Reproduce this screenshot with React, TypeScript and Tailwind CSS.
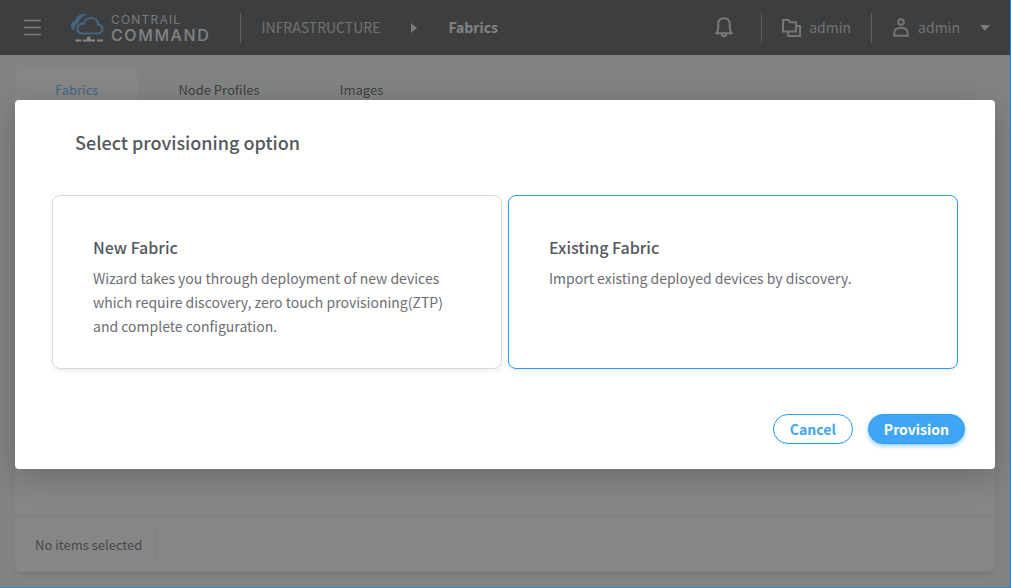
import React, { useState } from "react";

function Logo() {
  return (
    <a href="#home" className="flex items-center gap-[7px]" aria-label="Contrail Command">
      <svg className="h-[30px] w-[34px]" viewBox="0 0 34 30" fill="none" aria-hidden="true">
        <path d="M1 12.5C1.4 9.8 3 8.2 5.2 7.6C6.2 2.6 11.8-.4 17.6 1.2C12.6 3.2 9.4 5.6 8.8 9.3C5.8 10.7 3.9 13.6 4.5 17.6C2.2 16.6 .8 14.8 1 12.5Z" fill="#4ba6f2" />
        <path
          d="M12 20.5H27.5C30.4 20.5 32.4 18.6 32.4 16.2C32.4 13.7 30.6 12 28.2 11.8C28 7.8 25 5 21 5C17.4 5 14.7 7 13.7 10.6C9.8 10.2 7.4 12.5 7.4 15.6C7.4 18.5 9.4 20.5 12 20.5Z"
          stroke="#4ba6f2"
          strokeWidth="2.2"
        />
        <path d="M5.5 26.5h6v2h-6zM13 26.5h4v-2.8h3.5v2.8h4.5v2H13zM27 26.5h6v2h-6z" fill="#ffffff" />
      </svg>
      <span className="flex flex-col font-['Inter',sans-serif] text-[#f4f4f4]">
        <span className="text-[12px] leading-[14px] tracking-widest text-[#dcdcdc]">CONTRAIL</span>
        <span className="text-[16px] leading-[16px] font-medium tracking-widest">COMMAND</span>
      </span>
    </a>
  );
}

function Divider() {
  return <span className="h-[30px] w-px shrink-0 bg-[#97999b]" />;
}

function Header() {
  return (
    <header className="flex h-[55px] shrink-0 items-center bg-[#3a3c3f] text-[#c8c9ca]">
      <button type="button" aria-label="Toggle menu" className="mr-[29px] ml-[24px] flex h-[18px] w-[17px] items-center">
        <svg className="h-[18px] w-[17px]" viewBox="0 0 17 18" stroke="#e0e0e0" strokeWidth="1.6" aria-hidden="true">
          <path d="M0 1.5h17M0 8.5h17M0 15.5h17" />
        </svg>
      </button>
      <Logo />
      <nav aria-label="Breadcrumb" className="ml-[30px] flex flex-1 items-center text-[14px]">
        <Divider />
        <a href="#infrastructure" className="ml-[20px] text-[#c8c9ca]">INFRASTRUCTURE</a>
        <svg className="mx-[31px] h-[10px] w-[6px]" viewBox="0 0 6 10" fill="#e0e0e0" aria-hidden="true">
          <path d="M0 0L6 5L0 10Z" />
        </svg>
        <span className="font-bold text-[#f4f4f4]">Fabrics</span>
      </nav>
      <button type="button" aria-label="Notifications" className="mr-[28px]">
        <svg className="h-[22px] w-[18px]" viewBox="0 0 18 22" fill="none" stroke="#dadada" strokeWidth="2" aria-hidden="true">
          <path d="M1 16.2H17C15.4 14.8 14.8 13.6 14.8 11.8V7C14.8 3.2 12.4 1.2 9 1.2S3.2 3.2 3.2 7V11.8C3.2 13.6 2.6 14.8 1 16.2Z" strokeLinejoin="round" />
          <path d="M6.6 16.8C6.8 20 11.2 20 11.4 16.8" />
        </svg>
      </button>
      <Divider />
      <button type="button" className="mx-[20px] flex items-center gap-2 text-[14px]">
        <svg className="h-[18px] w-[19px]" viewBox="0 0 19 18" fill="none" stroke="#d2d2d2" strokeWidth="2" aria-hidden="true">
          <path d="M1 1H6.6L8 3.2H14V12.4H1V0" />
          <path d="M14 7H18V17H6.2V12.4" />
        </svg>
        admin
      </button>
      <Divider />
      <button type="button" className="mx-[21px] flex items-center text-[14px]">
        <svg className="mr-[9px] h-[19px] w-[16px]" viewBox="0 0 16 19" fill="none" stroke="#d2d2d2" strokeWidth="2" aria-hidden="true">
          <circle cx="8" cy="4" r="2.8" />
          <path d="M1.2 17.8V15.4C1.2 12 3.8 9.8 8 9.8S14.8 12 14.8 15.4V17.8Z" strokeLinejoin="round" />
        </svg>
        admin
        <svg className="ml-[20px] h-[6px] w-[10px]" viewBox="0 0 10 6" fill="#e0e0e0" aria-hidden="true">
          <path d="M0 0H10L5 6Z" />
        </svg>
      </button>
    </header>
  );
}

function FabricsPage() {
  return (
    <main className="flex flex-1 flex-col pt-[15px] pr-4 pb-4 pl-[15px]">
      <nav className="flex text-[13px] text-[#3c3e42]">
        <a href="#fabrics" className="rounded-t-md bg-white px-[40px] py-[10px] leading-[20px] text-[#45a8ff]">Fabrics</a>
        <a href="#node-profiles" className="px-[40px] py-[10px] leading-[20px]">Node Profiles</a>
        <a href="#images" className="px-[40px] py-[10px] leading-[20px]">Images</a>
      </nav>
      <section className="flex flex-1 flex-col rounded-b-md bg-white shadow-md">
        <div className="flex-1" />
        <footer className="flex items-center gap-[14px] border-t border-[#e4e6e8] px-[20px] py-[15px] text-[13px] leading-[25px] text-[#55575b]">
          No items selected
          <span className="h-[25px] w-px bg-[#e4e6e8]" />
        </footer>
      </section>
    </main>
  );
}

const options = [
  {
    id: "new",
    title: "New Fabric",
    text: "Wizard takes you through deployment of new devices which require discovery, zero touch provisioning(ZTP) and complete configuration.",
  },
  {
    id: "existing",
    title: "Existing Fabric",
    text: "Import existing deployed devices by discovery.",
  },
];

function ProvisionDialog() {
  const [selected, setSelected] = useState("existing");
  return (
    <div
      role="dialog"
      aria-modal="true"
      aria-labelledby="dialog-title"
      className="w-full rounded-[4px] bg-white pt-[29px] pb-[25px] text-[#55585d] shadow-[0_8px_32px_rgba(0,0,0,0.2)]"
    >
      <h2 id="dialog-title" className="px-[60px] text-[18px] leading-[26px] font-medium">
        Select provisioning option
      </h2>
      <div className="mt-[40px] grid grid-cols-2 gap-[6px] px-[37px]">
        {options.map((o) => (
          <button
            key={o.id}
            type="button"
            aria-pressed={selected === o.id}
            onClick={() => setSelected(o.id)}
            className={
              "flex min-h-[174px] flex-col items-start rounded-lg border px-[40px] pt-[39px] pb-[29px] text-left shadow-[0_2px_4px_rgba(0,0,0,0.07)] " +
              (selected === o.id ? "border-[#2a9bf3]" : "border-[#d8dadb]")
            }
          >
            <span className="text-[16px] leading-[24px] font-medium">{o.title}</span>
            <span className="mt-[7px] text-[14px] leading-[24px] text-[#6b6e73]">{o.text}</span>
          </button>
        ))}
      </div>
      <div className="mt-[45px] flex justify-end gap-[15px] px-[30px] text-[14px] leading-[28px] font-bold">
        <button type="button" className="min-w-20 rounded-full border border-[#2a9bf3] px-[15px] text-[#3fa5f5] shadow-[0_1px_2px_rgba(42,155,243,0.15)]">
          Cancel
        </button>
        <button type="button" className="min-w-20 rounded-full border border-[#2f9ff5] bg-[#3fa5f5] px-[15px] text-white shadow-[0_2px_4px_rgba(42,155,243,0.5)]">
          Provision
        </button>
      </div>
    </div>
  );
}

export default function App() {
  return (
    <div className="relative flex min-h-screen flex-col bg-[#f4f8f6] font-['Noto_Sans_CJK_SC',sans-serif]">
      <Header />
      <FabricsPage />
      <div className="absolute inset-0 flex items-start border-r border-b border-[#1e88d8] bg-[rgba(63,63,63,0.63)] px-[15px] pt-[100px]">
        <ProvisionDialog />
      </div>
    </div>
  );
}
